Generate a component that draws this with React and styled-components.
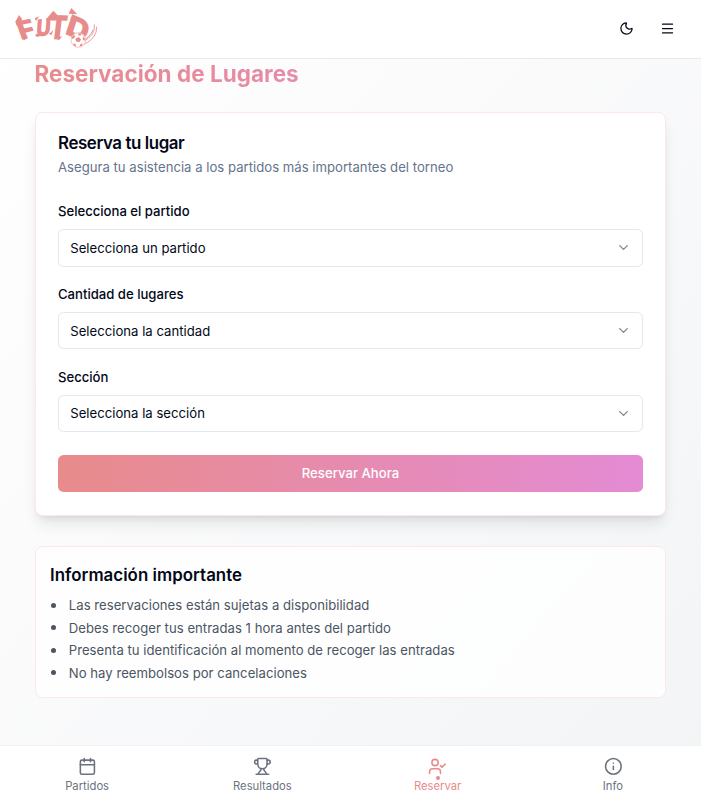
import React from "react";
import styled, { createGlobalStyle } from "styled-components";
import { Moon, Menu, ChevronDown, Calendar, Trophy, UserCheck, Info } from "lucide-react";

const GlobalStyle = createGlobalStyle`
  html { font-size: 15px; }
  *, *::before, *::after { box-sizing: border-box; }
  body { margin: 0; font-family: Inter, "Liberation Sans", sans-serif; color: #020817; }
  h1, h2, p, ul { margin: 0; padding: 0; }
  button { font-family: inherit; }
`;

const Page = styled.div`
  height: 800px;
  display: flex;
  flex-direction: column;
  overflow: hidden;
  background: linear-gradient(to bottom right, #ffffff, #f3f4f6);
`;

const Header = styled.header`
  flex: none;
  height: 59px;
  display: flex;
  align-items: center;
  justify-content: space-between;
  padding-right: 15px;
  padding-bottom: 0.5px;
  background: #fff;
  border-bottom: 1px solid #e9eaec;
`;

const Logo = styled.svg`
  width: 120px;
  height: 60px;
  flex: none;
  fill: #e88b8b;
  font-family: Inter, sans-serif;
  font-weight: 900;
`;

const Actions = styled.div`
  display: flex;
  gap: 3.75px;
`;

const IconButton = styled.button`
  width: 37.5px;
  height: 37.5px;
  padding: 0;
  border: 0;
  display: grid;
  place-items: center;
  background: none;
  color: #020817;
`;

const Main = styled.main`
  flex: 1;
  min-height: 0;
  padding: 0 35px;
`;

const PageTitle = styled.h1`
  height: 30px;
  margin: 0 0 22.5px -0.5px;
  font-size: 22.5px;
  line-height: 30px;
  font-weight: 700;
  letter-spacing: 0.02px;
  color: transparent;
  background: linear-gradient(to right, #e88b8b, #e48bd4);
  background-clip: text;
  -webkit-background-clip: text;
`;

const Card = styled.section`
  border: 1px solid #fce7ea;
  border-radius: 7.5px;
  background: #fff;
  padding: 22.5px 22px;
  height: 404.5px;
  box-shadow: 0 10px 15px -3px rgba(0, 0, 0, 0.1), 0 4px 6px -4px rgba(0, 0, 0, 0.1);
`;

const CardTitle = styled.h2`
  font-size: 16.875px;
  line-height: 17px;
  font-weight: 600;
  letter-spacing: -0.4px;
`;

const CardText = styled.p`
  margin-top: 6px;
  font-size: 13.125px;
  line-height: 18.75px;
  letter-spacing: 0.02px;
  color: #64748b;
`;

const Form = styled.form`
  margin-top: 29.5px;
  display: flex;
  flex-direction: column;
  gap: 22.5px;
`;

const Field = styled.div`
  display: flex;
  flex-direction: column;
  gap: 12.25px;
`;

const Label = styled.label`
  font-size: 13.125px;
  line-height: 10.5px;
  font-weight: 500;
`;

const Select = styled.button`
  height: 37.5px;
  padding: 0 11.25px;
  display: flex;
  align-items: center;
  justify-content: space-between;
  border: 1px solid #e2e8f0;
  border-radius: 5.6px;
  background: #fff;
  color: #020817;
  font-size: 13.125px;
  letter-spacing: 0.02px;

  svg { opacity: 0.5; }
`;

const Submit = styled.button`
  height: 37.5px;
  border: 0;
  border-radius: 5.6px;
  color: #fff;
  font-size: 13.125px;
  font-weight: 500;
  letter-spacing: 0.03px;
  background: linear-gradient(to right, #e88b8b, #e48bd4);
`;

const Notice = styled.section`
  margin-top: 30px;
  height: 152px;
  padding: 15px 14px;
  border: 1px solid #fce7ea;
  border-radius: 7.5px;
  background: rgba(255, 255, 255, 0.8);
`;

const NoticeTitle = styled.h2`
  font-size: 16.875px;
  line-height: 26.25px;
  font-weight: 600;
  letter-spacing: 0.03px;
`;

const NoticeList = styled.ul`
  margin-top: 7.8px;
  display: flex;
  flex-direction: column;
  gap: 3.75px;
  list-style: none;
`;

const NoticeItem = styled.li`
  display: flex;
  align-items: center;
  gap: 13.3px;
  font-size: 13.125px;
  line-height: 18.75px;
  letter-spacing: 0.03px;
  color: #4b5563;

  &::before {
    content: "";
    width: 5px;
    height: 5px;
    margin-left: 0.5px;
    border-radius: 50%;
    background: currentColor;
  }
`;

const BottomNav = styled.nav`
  flex: none;
  height: 55.5px;
  display: grid;
  grid-template-columns: repeat(4, 1fr);
  background: #fff;
  border-top: 1px solid #f1f2f4;
`;

const NavItem = styled.a`
  position: relative;
  display: flex;
  flex-direction: column;
  align-items: center;
  padding-top: 11px;
  padding-right: 1px;
  gap: 3.5px;
  font-size: 11.25px;
  line-height: 15px;
  color: ${(p) => (p.$active ? "#e88b8b" : "#6b7280")};
`;

const ActiveDot = styled.span`
  position: absolute;
  top: 30px;
  left: calc(50% - 2.2px);
  width: 4px;
  height: 4px;
  border-radius: 50%;
  background: #e88b8b;
`;

const fields = [
  ["Selecciona el partido", "Selecciona un partido"],
  ["Cantidad de lugares", "Selecciona la cantidad"],
  ["Sección", "Selecciona la sección"],
];

const notices = [
  "Las reservaciones están sujetas a disponibilidad",
  "Debes recoger tus entradas 1 hora antes del partido",
  "Presenta tu identificación al momento de recoger las entradas",
  "No hay reembolsos por cancelaciones",
];

const tabs = [
  { label: "Partidos", icon: Calendar },
  { label: "Resultados", icon: Trophy },
  { label: "Reservar", icon: UserCheck, active: true },
  { label: "Info", icon: Info },
];

function Brand() {
  return (
    <Logo viewBox="0 0 360 180" aria-label="FUTD">
      <text fontSize="84" transform="translate(63 123) rotate(-12) skewX(8) scale(1.02 .93)">F</text>
      <text fontSize="76" transform="translate(107 113) rotate(-6) skewX(-10) scale(.8 .92)">U</text>
      <text fontSize="98" transform="translate(143 121) rotate(1) skewX(-6) scale(.8 1.02)">T</text>
      <text fontSize="96" transform="translate(193 104) rotate(22) skewX(4) scale(1 .9)">D</text>
      <path d="M46 68 57 48 66 60 62 74 51 82ZM67 110 65 116 74 124 83 113ZM104 58 118 52 108 66ZM137 62 160 35 174 50 150 64ZM164 110 176 124 186 113ZM206 44 214 27 232 46ZM108 104 106 111 114 114 125 108ZM147 104 160 94 154 109Z" />
      <path d="M283 76Q288 109 246 130M290 83Q292 116 253 136M279 92Q270 116 248 123" fill="none" stroke="#e88b8b" strokeWidth="2.5" />
      <circle cx="235" cy="123" r="22" fill="#fff" stroke="#efa4a4" strokeWidth="2" />
      <path d="m229 117 8-2 6 6-4 8-9-1-4-6ZM215 116l6-8 5 3-4 7-5 2ZM236 102l9 3-4 5-7-2ZM249 112l6 7-2 8-5-6ZM220 133l7 3 1 7-7-4ZM241 136l7-3-2 8-8 1Z" />
    </Logo>
  );
}

export default function App() {
  return (
    <Page>
      <GlobalStyle />
      <Header>
        <Brand />
        <Actions>
          <IconButton aria-label="Tema"><Moon size={15} /></IconButton>
          <IconButton aria-label="Menú"><Menu size={15} /></IconButton>
        </Actions>
      </Header>
      <Main>
        <PageTitle>Reservación de Lugares</PageTitle>
        <Card>
          <CardTitle>Reserva tu lugar</CardTitle>
          <CardText>Asegura tu asistencia a los partidos más importantes del torneo</CardText>
          <Form>
            {fields.map(([label, value]) => (
              <Field key={label}>
                <Label>{label}</Label>
                <Select type="button">{value}<ChevronDown size={15} /></Select>
              </Field>
            ))}
            <Submit type="button">Reservar Ahora</Submit>
          </Form>
        </Card>
        <Notice>
          <NoticeTitle>Información importante</NoticeTitle>
          <NoticeList>
            {notices.map((text) => <NoticeItem key={text}>{text}</NoticeItem>)}
          </NoticeList>
        </Notice>
      </Main>
      <BottomNav>
        {tabs.map(({ label, icon: Icon, active }) => (
          <NavItem key={label} $active={active}>
            <Icon size={18.75} />
            {label}
            {active && <ActiveDot />}
          </NavItem>
        ))}
      </BottomNav>
    </Page>
  );
}
